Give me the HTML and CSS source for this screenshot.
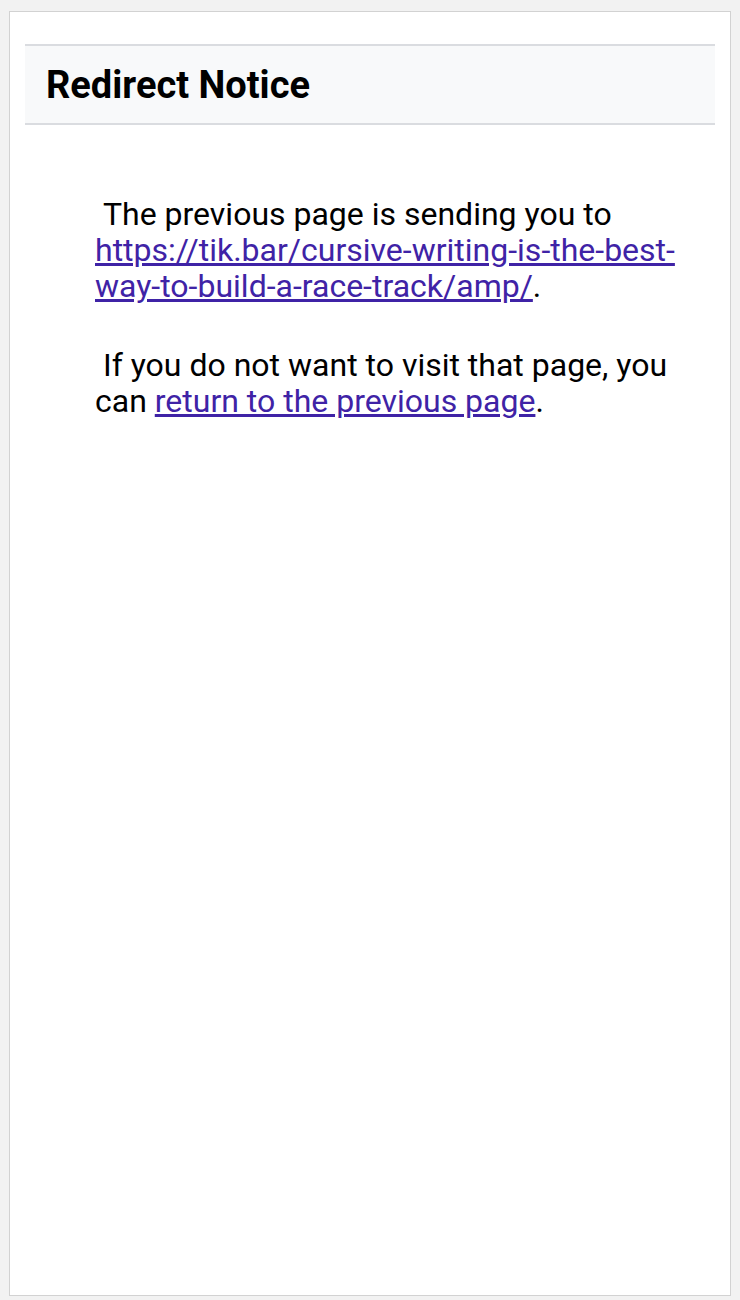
FILE: index.html
```html
<!DOCTYPE html>
<html>
<head>
<meta charset="utf-8">
<link rel="stylesheet" href="styles.css">
</head>
<body>
<div class="card">
  <div class="header">
    <h1 class="title">Redirect Notice</h1>
  </div>
  <div class="content">
    <p class="para">&nbsp;The previous page is sending you to <a class="link" href="#">https://tik.bar/cursive-writing-is-the-best-way-to-build-a-race-track/amp/</a>.</p>
    <p class="para">&nbsp;If you do not want to visit that page, you can <a class="link" href="#">return to the previous page</a>.</p>
  </div>
</div>
</body>
</html>
```

FILE: styles.css
```css
html, body {
  margin: 0;
  padding: 0;
}
body {
  background: #f2f2f2;
  font-family: Roboto, "Liberation Sans", Arial, sans-serif;
  width: 740px;
  height: 1300px;
  box-sizing: border-box;
  padding: 11px 9px 4px 9px;
}
.card {
  background: #fff;
  border: 1px solid #d2d2d2;
  height: 100%;
  box-sizing: border-box;
  padding: 32px 15px 0 15px;
}
.header {
  background: #f8f9fa;
  border-top: 2px solid #dadce0;
  border-bottom: 2px solid #dadce0;
  height: 81px;
  box-sizing: border-box;
  display: flex;
  align-items: center;
  padding: 0 21px;
}
.title {
  margin: 0;
  font-size: 38px;
  font-weight: bold;
  color: #000;
}
.content {
  padding: 71px 29px 0 70px;
  font-size: 32px;
  line-height: 36px;
  color: #000;
}
.para {
  margin: 0 0 43px 0;
}
.link {
  color: #3f23a6;
  text-decoration: underline;
}
```
